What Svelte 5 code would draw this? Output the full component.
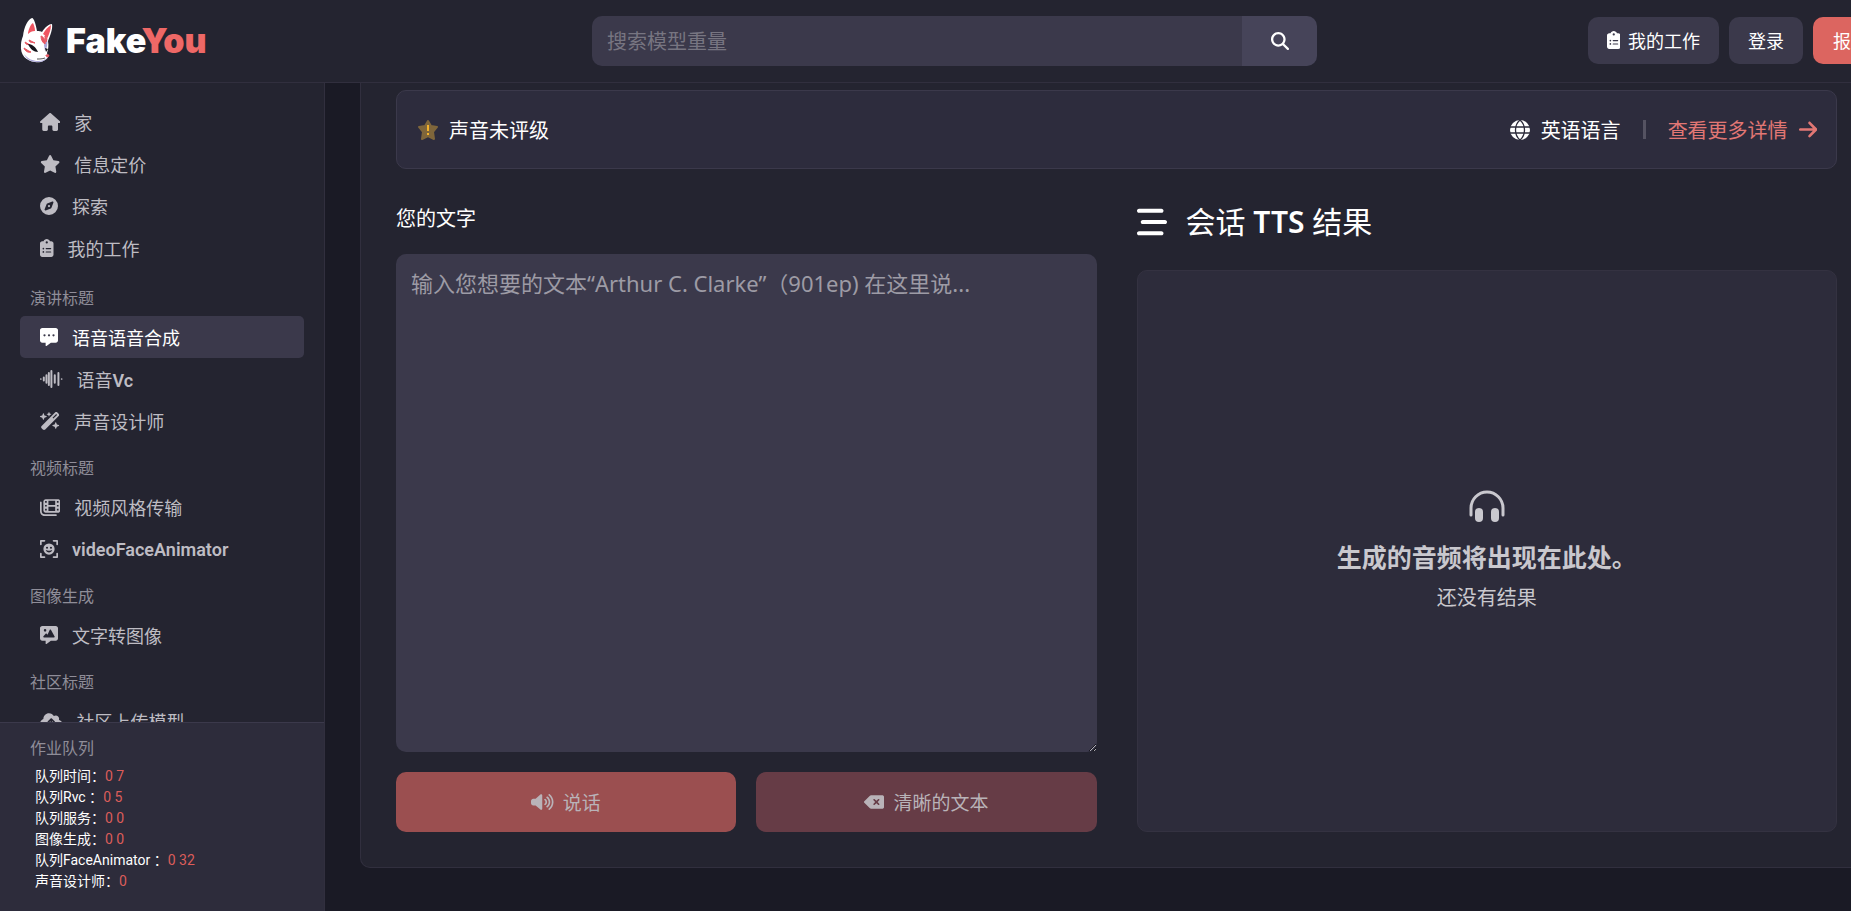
<script>
	let searchTerm = '';
	let speechText = '';

	const icons = {
		home: {
			width: 576,
			path: 'M575.8 255.5c0 18-15 32.1-32 32.1h-32l.7 160.2c0 2.7-.2 5.4-.5 8.1V472c0 22.1-17.9 40-40 40H392c-22.1 0-40-17.9-40-40V384c0-17.7-14.3-32-32-32H256c-17.7 0-32 14.3-32 32v88c0 22.1-17.9 40-40 40H104c-22.1 0-40-17.9-40-40V287.600H32c-18 0-32-14-32-32.100c0-9 3-17 10-24L266.400 8c7-7 15-8 22-8s15 2 21 7L564.800 231.500c8 7 12 15 11 24z',
		},
		star: {
			width: 576,
			path: 'M316.9 18C311.6 7 300.4 0 288.1 0s-23.4 7-28.8 18L195 150.3 51.4 171.5c-12 1.8-22 10.2-25.7 21.700s-.7 24.200 7.900 32.700L137.800 329 113.200 474.700c-2 12 3 24.200 12.900 31.300s23 8 33.800 2.300l128.300-68.500 128.300 68.500c10.800 5.700 23.900 4.900 33.800-2.300s14.900-19.300 12.900-31.300L438.500 329 542.700 225.900c8.600-8.500 11.700-21.200 7.900-32.700s-13.700-19.900-25.700-21.700L381.200 150.300 316.900 18z',
		},
		compass: {
			width: 512,
			path: 'M256 512A256 256 0 1 0 256 0a256 256 0 1 0 0 512zm50.7-186.9L162.4 380.6c-19.4 7.5-38.5-11.6-31-31l55.5-144.3c3.3-8.5 9.9-15.1 18.4-18.4l144.3-55.5c19.4-7.5 38.5 11.6 31 31L325.1 306.7c-3.2 8.5-9.9 15.1-18.4 18.400zM288 256a32 32 0 1 0 -64 0 32 32 0 1 0 64 0z',
		},
		clipboard: {
			width: 384,
			path: 'M192 0c-41.8 0-77.4 26.7-90.5 64H64C28.7 64 0 92.7 0 128V448c0 35.3 28.7 64 64 64H320c35.3 0 64-28.7 64-64V128c0-35.3-28.7-64-64-64H282.5C269.4 26.7 233.8 0 192 0zm0 64a32 32 0 1 1 0 64 32 32 0 1 1 0-64zM72 272a24 24 0 1 1 48 0 24 24 0 1 1 -48 0zm104-16H304c8.8 0 16 7.2 16 16s-7.2 16-16 16H176c-8.8 0-16-7.2-16-16s7.2-16 16-16zM72 368a24 24 0 1 1 48 0 24 24 0 1 1 -48 0zm88 0c0-8.8 7.2-16 16-16H304c8.8 0 16 7.2 16 16s-7.2 16-16 16H176c-8.8 0-16-7.2-16-16z',
		},
		dots: {
			width: 512,
			path: 'M64 0C28.7 0 0 28.7 0 64V352c0 35.3 28.7 64 64 64h96v80c0 13 14 20 25.600 12.800L309.300 416H448c35.300 0 64-28.700 64-64V64c0-35.300-28.700-64-64-64H64zM128 176a32 32 0 1 1 0 64 32 32 0 1 1 0-64zM256 176a32 32 0 1 1 0 64 32 32 0 1 1 0-64zM384 176a32 32 0 1 1 0 64 32 32 0 1 1 0-64z',
		},
		wave: {
			width: 640,
			path: 'M0 256a24 24 0 1 1 48 0a24 24 0 1 1 -48 0zM80 216a28 28 0 0 1 56 0v80a28 28 0 0 1 -56 0zM156 152a28 28 0 0 1 56 0v208a28 28 0 0 1 -56 0zM224 88a28 28 0 0 1 56 0v336a28 28 0 0 1 -56 0zM296 28a28 28 0 0 1 56 0v456a28 28 0 0 1 -56 0zM392 152a28 28 0 0 1 56 0v208a28 28 0 0 1 -56 0zM496 88a28 28 0 0 1 56 0v336a28 28 0 0 1 -56 0zM592 256a24 24 0 1 1 48 0a24 24 0 1 1 -48 0z',
		},
		wand: {
			width: 576,
			path: 'M234.700 42.700L197 56.800c-6 2-6 12 0 14.400l37.700 14.100L248.800 123c2 6 12 6 14.400 0l14.100-37.700L315 71.200c6-2 6-12 0-14.400L277.300 42.700 263.200 5c-2-6-12-6-14.400 0zM46.100 395.400c-18.700 18.700-18.700 49.100 0 67.900l34.600 34.600c18.700 18.700 49.100 18.700 67.900 0L529.900 116.500c18.700-18.700 18.700-49.100 0-67.900L495.300 14.100c-18.700-18.700-49.100-18.700-67.900 0zM484.600 82.600l-105 105-23.300-23.300 105-105zM7.500 117.200c-10 4-10 18 0 21.600L64 160l21.200 56.500c4 10 18 10 21.600 0L128 160l56.500-21.200c10-4 10-18 0-21.600L128 96 106.800 39.500c-4-10-18-10-21.600 0L64 96zM359.500 373.200c-10 4-10 18 0 21.600L416 416l21.200 56.500c4 10 18 10 21.600 0L480 416l56.500-21.200c10-4 10-18 0-21.600L480 352l-21.200-56.500c-4-10-18-10-21.600 0L416 352z',
		},
		film: {
			width: 576,
			path: 'M24 96c13 0 24 11 24 24v256c0 48 40 88 88 88h320c13 0 24 11 24 24s-11 24-24 24H136C61 512 0 451 0 376V120c0-13 11-24 24-24zM160 32h352c35 0 64 29 64 64v256c0 35-29 64-64 64H160c-35 0-64-29-64-64V96c0-35 29-64 64-64zM144 84v48h48V84zm0 112v48h48v-48zm0 112v48h48v-48zM240 80v120h192V80zm0 168v120h192V248zM480 84v48h48V84zm0 112v48h48v-48zm0 112v48h48v-48z',
		},
		face: {
			width: 512,
			path: 'M24 0h104c13 0 24 11 24 24s-11 24-24 24H48v80c0 13-11 24-24 24S0 141 0 128V24C0 11 11 0 24 0zM384 0h104c13 0 24 11 24 24v104c0 13-11 24-24 24s-24-11-24-24V48h-80c-13 0-24-11-24-24s11-24 24-24zM24 360c13 0 24 11 24 24v80h80c13 0 24 11 24 24s-11 24-24 24H24c-13 0-24-11-24-24V384c0-13 11-24 24-24zM488 360c13 0 24 11 24 24v104c0 13-11 24-24 24H384c-13 0-24-11-24-24s11-24 24-24h80v-80c0-13 11-24 24-24zM256 96a160 160 0 1 1 0 320 160 160 0 1 1 0-320zM200 192a30 30 0 1 0 0 60 30 30 0 1 0 0-60zM312 192a30 30 0 1 0 0 60 30 30 0 1 0 0-60zM164 286c18 88 166 88 184 0c-48 26-136 26-184 0z',
		},
		image: {
			width: 512,
			path: 'M64 0C28.700 0 0 28.700 0 64V352c0 35.300 28.700 64 64 64h96v80c0 13 14 20 25.600 12.800L309.300 416H448c35.300 0 64-28.700 64-64V64c0-35.300-28.700-64-64-64H64zM144 88a36 36 0 1 1 0 72 36 36 0 1 1 0-72zM278 106c8-12 24-12 32 0l106 192c8 14-2 30-18 30H114c-18 0-28-20-16-34l62-76c8-10 22-10 30 0l24 28z',
		},
		cloud: {
			width: 640,
			path: 'M144 480C64.500 480 0 415.500 0 336c0-62.800 40.200-116.200 96.200-135.900C96 197.500 96 194.700 96 192c0-88.400 71.600-160 160-160c59.300 0 111 32.200 138.700 80.200C409.900 102 428.300 96 448 96c53 0 96 43 96 96c0 12.200-2.300 23.800-6.400 34.600C596 238.400 640 290.100 640 352c0 70.700-57.300 128-128 128zM223 263c-22 22 12 56 34 34l39-39v134c0 32 48 32 48 0V258l39 39c22 22 56-12 34-34l-80-80c-10-10-24-10-34 0z',
		},
		search: {
			width: 512,
			path: 'M416 208c0 45.900-14.900 88.300-40 122.700L502.600 457.400c12.500 12.500 12.500 32.800 0 45.300s-32.800 12.500-45.300 0L330.700 376c-34.400 25.200-76.800 40-122.700 40C93.100 416 0 322.900 0 208S93.100 0 208 0S416 93.100 416 208zM208 352a144 144 0 1 0 0-288 144 144 0 1 0 0 288z',
		},
		bars: {
			width: 512,
			path: 'M36 28h380c48 0 48 72 0 72H36c-48 0-48-72 0-72zM100 220h376c48 0 48 72 0 72H100c-48 0-48-72 0-72zM36 412h380c48 0 48 72 0 72H36c-48 0-48-72 0-72z',
		},
		arrow: {
			width: 448,
			path: 'M438.600 278.600c12.500-12.500 12.500-32.800 0-45.300l-160-160c-12.500-12.500-32.800-12.500-45.300 0s-12.500 32.800 0 45.300L338.800 224 32 224c-17.700 0-32 14.300-32 32s14.300 32 32 32l306.700 0L233.400 393.400c-12.500 12.500-12.500 32.800 0 45.300s32.800 12.500 45.300 0l160-160z',
		},
		volume: {
			width: 640,
			path: 'M301 36c12 5 19 16 19 28v384c0 27-32 43-53 24L131 352H64c-35 0-64-29-64-64v-64c0-35 29-64 64-64h67L267 40c9-8 22-10 34-4zM413 168c28 20 45 53 45 88s-17 68-45 88c-24 17-52-18-28-37c16-12 25-30 25-51s-9-39-25-51c-24-19 4-54 28-37zM473 102c46 37 76 92 76 154s-30 117-76 154c-24 19-54-17-30-37c35-28 58-70 58-117s-23-89-58-117c-24-20 6-56 30-37zM533 33c65 53 107 133 107 223s-42 170-107 223c-24 19-54-18-30-37c54-44 89-111 89-186S557 114 503 70c-24-19 6-56 30-37z',
		},
		erase: {
			width: 576,
			path: 'M576 128c0-35.300-28.700-64-64-64H205.300c-17 0-33.300 6.700-45.300 18.700L9.400 233.400c-6 6-9.400 14.100-9.400 22.600s3.400 16.600 9.400 22.600L160 429.300c12 12 28.300 18.700 45.300 18.700H512c35.300 0 64-28.700 64-64zM271 175c9-9 25-9 34 0l47 47 47-47c23-23 57 11 34 34l-47 47 47 47c23 23-11 57-34 34l-47-47-47 47c-23 23-57-11-34-34l47-47-47-47c-9-9-9-25 0-34z',
		},
	};

	const groups = [
		{
			links: [
				{ icon: 'home', label: '家' },
				{ icon: 'star', label: '信息定价' },
				{ icon: 'compass', label: '探索' },
				{ icon: 'clipboard', label: '我的工作' },
			],
		},
		{
			title: '演讲标题',
			links: [
				{ icon: 'dots', label: '语音语音合成', active: true },
				{ icon: 'wave', label: '语音', latin: 'Vc' },
				{ icon: 'wand', label: '声音设计师' },
			],
		},
		{
			title: '视频标题',
			links: [
				{ icon: 'film', label: '视频风格传输' },
				{ icon: 'face', label: '', latin: 'videoFaceAnimator' },
			],
		},
		{
			title: '图像生成',
			links: [{ icon: 'image', label: '文字转图像' }],
		},
		{
			title: '社区标题',
			links: [{ icon: 'cloud', label: '社区上传模型' }],
		},
	];

	const queues = [
		{ name: '队列时间：', count: '0 7' },
		{ name: '队列Rvc ：', count: '0 5' },
		{ name: '队列服务：', count: '0 0' },
		{ name: '图像生成：', count: '0 0' },
		{ name: '队列FaceAnimator ：', count: '0 32' },
		{ name: '声音设计师：', count: '0' },
	];
</script>

{#snippet icon(name)}
	<svg
		class="icon"
		viewBox="0 0 {icons[name].width} 512"
		style="aspect-ratio: {icons[name].width} / 512"
		aria-hidden="true"
	>
		<path d={icons[name].path} fill="currentColor" fill-rule="evenodd" />
	</svg>
{/snippet}

<div class="viewport">
	<div class="page">
		<header class="topbar">
			<a class="logo" href="/">
				<svg class="fox" viewBox="0 0 34 46" aria-hidden="true">
					<path d="M3 19C4 10 8 2 12 1c2 0 4 7 5 13 2 0 4 0 5 1 3-5 7-8 10-8 1 5-2 12-4 17 1 5 0 9-1 12l1 4c-2 4-8 6-13 5C6 44 0 38 1 28c0-4 1-6 2-9z" fill="#fff" />
					<path d="M4 37c4 5 9 7 14 7 4 0 7-1 9-4-1 4-5 5-10 5-6 0-11-3-13-8zM27 22c1 5 0 9-2 12l-1-6z" fill="#aaa6d8" />
					<path d="M8 16c1-5 3-9 5-10 1 2 2 5 2 8-3 0-5 1-7 3zM23 17c2-4 5-7 8-9 0 5-2 9-4 14-1-2-2-4-4-5z" fill="#ef5561" />
					<path d="M21 19c3 1 5 5 4 8-2-1-4-4-4-8zM25 19l2 3-1 3c-1-2-1-4-1-6zM5 25l5 3-4-1zM4 31c2 1 4 3 7 4-3 1-6-1-7-4zM9 23l6 3-5-1zM26 38h3l-1 2-2-1z" fill="#e65863" stroke="#e65863" />
					<path d="M8 27c4 0 8 3 10 8-4 0-8-3-10-8zM25 31l3 1-2 3z" fill="#15151c" />
					<path d="M17 42c3 0 5 0 8-1" fill="none" stroke="#555" />
				</svg>
				<span class="brand">Fake<span class="you">You</span></span>
			</a>
			<form class="search" action="/search">
				<input
					type="text"
					aria-label="搜索模型重量"
					placeholder="搜索模型重量"
					bind:value={searchTerm}
				/>
				<button type="submit" aria-label="搜索">{@render icon('search')}</button>
			</form>
			<div class="actions">
				<button class="action">{@render icon('clipboard')}我的工作</button>
				<button class="action">登录</button>
				<button class="action signup">报名</button>
			</div>
		</header>

		<div class="body">
			<aside class="sidebar">
				<nav>
					{#each groups as group}
						<div class="group">
							{#if group.title}
								<h3>{group.title}</h3>
							{/if}
							{#each group.links as link}
								<a class="link" class:active={link.active} href="/">
									{@render icon(link.icon)}
									<span>{link.label}{#if link.latin}<b>{link.latin}</b>{/if}</span>
								</a>
							{/each}
						</div>
					{/each}
				</nav>
				<section class="queue">
					<h3>作业队列</h3>
					<ul>
						{#each queues as queue}
							<li>{queue.name}<span>{queue.count}</span></li>
						{/each}
					</ul>
				</section>
			</aside>

			<main>
				<div class="panel">
					<div class="status">
						<div class="rating">
							<svg class="badge" viewBox="0 0 20 20" aria-hidden="true">
								<path
									d="M10 1l3 5 6 1-4 5 1 7-6-3-6 3 1-7-4-5 6-1z"
									fill="#7f663b"
									stroke="#7f663b"
									stroke-width="2"
									stroke-linejoin="round"
								/>
								<path d="M10 5v6M10 13v2" stroke="#f5b32c" stroke-width="2" />
							</svg>
							声音未评级
						</div>
						<div class="details">
							<svg class="badge" viewBox="0 0 20 20" aria-hidden="true">
								<circle cx="10" cy="10" r="10" fill="currentColor" />
								<path
									d="M0 7h20M0 13h20M10 0C4 5 4 15 10 20M10 0c6 5 6 15 0 20"
									fill="none"
									stroke="#2d2c3b"
									stroke-width="1.3"
								/>
							</svg>
							<span>英语语言</span>
							<span class="divider"></span>
							<a href="/">查看更多详情{@render icon('arrow')}</a>
						</div>
					</div>

					<div class="columns">
						<form class="editor">
							<label for="speech">您的文字</label>
							<textarea
								id="speech"
								placeholder="输入您想要的文本“Arthur C. Clarke”（901ep) 在这里说..."
								bind:value={speechText}
							></textarea>
							<div class="buttons">
								<button class="speak" disabled>{@render icon('volume')}说话</button>
								<button class="clear" disabled>{@render icon('erase')}清晰的文本</button>
							</div>
						</form>

						<section class="results">
							<h2>{@render icon('bars')}<span>会话 <b>TTS</b> 结果</span></h2>
							<div class="empty">
								<svg class="headphones" viewBox="0 0 36 32" aria-hidden="true">
									<path
										d="M2 25v-7a16 16 0 0 1 32 0v7"
										fill="none"
										stroke="currentColor"
										stroke-width="3"
										stroke-linecap="round"
									/>
									<rect x="6" y="18" width="8" height="14" rx="4" fill="currentColor" />
									<rect x="22" y="18" width="8" height="14" rx="4" fill="currentColor" />
								</svg>
								<strong>生成的音频将出现在此处。</strong>
								<p>还没有结果</p>
							</div>
						</section>
					</div>
				</div>
			</main>
		</div>
	</div>
</div>

<style>
	:global(body) {
		background-color: #1a1a25;
	}

	.viewport {
		height: 100vh;
		overflow: hidden;
		color: #fff;
		font-family: 'Noto Sans', 'Noto Sans CJK SC', sans-serif;
		font-size: 18px;
	}

	.viewport * {
		box-sizing: border-box;
	}

	/* the page is a little wider than the window */
	.page {
		display: flex;
		flex-direction: column;
		width: calc(100% + 58px);
		height: 100%;
	}

	a {
		color: inherit;
		text-decoration: none;
	}

	button,
	input,
	textarea {
		border: none;
		color: inherit;
		font-family: inherit;
		font-size: inherit;
	}

	h2,
	h3,
	p,
	ul {
		margin: 0;
		padding: 0;
		font-weight: 400;
	}

	b {
		font-weight: 600;
	}

	.icon {
		flex: none;
		height: 18px;
	}

	.topbar {
		display: grid;
		grid-template-columns: 1fr minmax(0, 725px) 1fr;
		align-items: center;
		flex: none;
		height: 83px;
		padding: 0 20px;
		border-bottom: 1px solid #312f3e;
		background-color: #242430;
	}

	.logo {
		display: flex;
		align-items: center;
		gap: 12px;
		margin-bottom: 2px;
	}

	.fox {
		width: 34px;
		height: 46px;
	}

	.brand {
		font-family: Inter, sans-serif;
		font-size: 34px;
		font-weight: 900;
	}

	.you {
		color: #ee6866;
	}

	.search {
		display: flex;
		height: 50px;
		border-radius: 10px;
		overflow: hidden;
	}

	.search input {
		flex: 1;
		min-width: 0;
		padding: 0 15px;
		background-color: #3b394b;
		font-size: 20px;
	}

	.search input::placeholder {
		color: #777581;
	}

	.search button {
		display: grid;
		place-items: center;
		width: 75px;
		background-color: #464459;
	}

	.actions {
		display: flex;
		justify-content: flex-end;
		gap: 10px;
		margin-bottom: 2px;
	}

	.action {
		display: flex;
		align-items: center;
		gap: 8px;
		height: 47px;
		padding: 0 19px;
		border-radius: 10px;
		background-color: #3b394b;
	}

	.signup {
		padding: 0 20px;
		background-color: #dc6560;
	}

	.body {
		display: flex;
		flex: 1;
		min-height: 0;
	}

	.sidebar {
		display: flex;
		flex-direction: column;
		flex: none;
		width: 325px;
		border-right: 1px solid #312f3e;
		background-color: #242430;
		font-family: Roboto, 'Noto Sans CJK SC', sans-serif;
	}

	nav {
		flex: 1;
		min-height: 0;
		padding: 18px 20px 0;
		overflow: hidden;
	}

	.group:first-child {
		margin-bottom: 3px;
	}

	h3 {
		padding: 16px 10px 6px;
		color: #8f8d98;
		font-size: 16px;
		line-height: 22px;
	}

	.link {
		display: flex;
		align-items: center;
		gap: 14px;
		height: 42px;
		padding: 0 20px;
		border-radius: 5px;
		color: #bebcc3;
	}

	.active {
		background-color: #3b394b;
		color: #fff;
	}

	.queue {
		padding: 0 20px 19px;
		border-top: 1px solid #3b394b;
		background-color: #2d2c3b;
	}

	.queue h3 {
		padding: 15px 10px 6px;
	}

	.queue ul {
		padding-left: 15px;
		font-size: 14px;
		line-height: 21px;
		list-style: none;
	}

	.queue span {
		color: #dc5d5a;
	}

	main {
		flex: 1;
		padding: 0 36px 43px 35px;
	}

	.panel {
		padding: 7px 35px 35px;
		border: 1px solid #312f3e;
		border-top: none;
		border-radius: 0 0 10px 10px;
		background-color: #242430;
	}

	.status {
		display: flex;
		align-items: center;
		justify-content: space-between;
		height: 79px;
		padding: 0 19px 0 21px;
		border: 1px solid #3b394b;
		border-radius: 10px;
		background-color: #2d2c3d;
		font-size: 20px;
	}

	.rating,
	.details,
	.details a {
		display: flex;
		align-items: center;
		gap: 11px;
	}

	.badge {
		width: 20px;
		height: 20px;
	}

	.divider {
		width: 3px;
		height: 19px;
		margin: 0 11px;
		background-color: #555362;
	}

	.details a {
		color: #e27774;
	}

	.details .icon {
		height: 21px;
	}

	.columns {
		display: grid;
		grid-template-columns: 1fr 1fr;
		gap: 40px;
		margin-top: 32px;
	}

	.editor {
		display: flex;
		flex-direction: column;
	}

	.editor label {
		margin-bottom: 17px;
		font-size: 20px;
		line-height: 36px;
	}

	textarea {
		height: 498px;
		padding: 12px 15px;
		border-radius: 10px;
		background-color: #3b394b;
		font-size: 22px;
		line-height: 34px;
		text-spacing-trim: space-all;
		resize: vertical;
	}

	textarea::placeholder {
		color: #9d9ba5;
	}

	.buttons {
		display: grid;
		grid-template-columns: 1fr 1fr;
		gap: 20px;
		margin-top: 20px;
	}

	.buttons button {
		display: flex;
		align-items: center;
		justify-content: center;
		gap: 9px;
		height: 60px;
		border-radius: 10px;
		color: #b9b3b8;
		font-size: 19px;
	}

	.speak {
		background-color: #9b4f50;
	}

	.clear {
		background-color: #663c46;
	}

	.results {
		display: flex;
		flex-direction: column;
	}

	h2 {
		display: flex;
		align-items: center;
		gap: 19px;
		margin-bottom: 27px;
		font-size: 30px;
		line-height: 42px;
	}

	h2 .icon {
		height: 30px;
	}

	.empty {
		display: flex;
		flex: 1;
		flex-direction: column;
		align-items: center;
		justify-content: center;
		border: 1px solid #343241;
		border-radius: 10px;
		background-color: #2d2c3b;
		color: #c9c8ce;
	}

	.headphones {
		width: 36px;
		height: 32px;
	}

	.empty strong {
		margin-top: 17px;
		font-size: 25px;
		line-height: 36px;
	}

	.empty p {
		margin-top: 8px;
		font-size: 20px;
		line-height: 30px;
	}
</style>
